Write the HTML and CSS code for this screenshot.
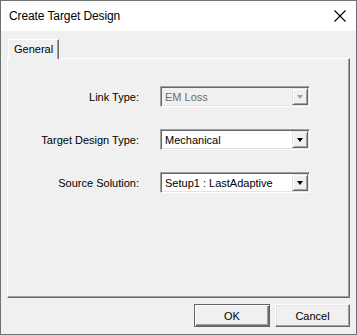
FILE: index.html
```html
<!DOCTYPE html>
<html>
<head>
<meta charset="utf-8">
<link rel="stylesheet" href="styles.css">
</head>
<body>
<div class="window">
  <div class="titlebar">
    <span class="title">Create Target Design</span>
    <svg class="close" width="12" height="12" viewBox="0 0 12 12"><path d="M0.5 0.5 L11.5 11.5 M11.5 0.5 L0.5 11.5" stroke="#000" stroke-width="1.1" fill="none"/></svg>
  </div>
  <div class="content">
    <div class="tabs"><div class="tab">General</div></div>
    <div class="panel">
      <div class="form">
        <div class="label">Link Type:</div>
        <div class="combo disabled"><span class="value">EM Loss</span><span class="btn"><span class="arrow"></span></span></div>
        <div class="label">Target Design Type:</div>
        <div class="combo"><span class="value">Mechanical</span><span class="btn"><span class="arrow"></span></span></div>
        <div class="label">Source Solution:</div>
        <div class="combo"><span class="value">Setup1 : LastAdaptive</span><span class="btn"><span class="arrow"></span></span></div>
      </div>
    </div>
    <div class="buttons">
      <button class="button default">OK</button>
      <button class="button">Cancel</button>
    </div>
  </div>
</div>
</body>
</html>
```
FILE: styles.css
```css
html, body { margin: 0; padding: 0; background: #f0f0f0; }
body { font-family: "Liberation Sans", Arial, sans-serif; font-size: 11px; color: #000; }
.window {
  width: 357px; height: 335px; box-sizing: border-box;
  border: 1px solid #717171; background: #f0f0f0;
  display: flex; flex-direction: column;
}
.titlebar {
  height: 30px; background: #fff; display: flex; align-items: center;
  padding: 0 9px 0 8px; justify-content: space-between;
}
.title { font-size: 12px; font-family: "Liberation Sans", Arial, sans-serif; letter-spacing: -0.1px; }
.close { margin-right: 1px; }
.content { padding: 8px 6px 0 6px; display: flex; flex-direction: column; }
.tabs { display: flex; height: 19px; }
.tab {
  margin-left: 1px; width: 51px; height: 20px; box-sizing: border-box;
  background: #f0f0f0; border-left: 1px solid #fff; border-top: 1px solid #fff;
  border-right: 1px solid #696969; box-shadow: inset -1px 0 #a0a0a0;
  padding: 3px 0 0 5px; position: relative; z-index: 1;
}
.panel {
  height: 240px; box-sizing: border-box;
  border-top: 1px solid #fff; border-left: 1px solid #fff;
  border-right: 1px solid #696969; border-bottom: 1px solid #696969;
  box-shadow: inset -1px -1px #a0a0a0;
  padding-top: 27px;
}
.form {
  display: grid; grid-template-columns: 131px 150px; column-gap: 21px; row-gap: 22px;
  align-items: center;
}
.label { text-align: right; }
.combo {
  height: 21px; box-sizing: border-box; display: flex; align-items: stretch;
  border: 1px solid; border-color: #a0a0a0 #fff #fff #a0a0a0;
  box-shadow: inset 1px 1px #696969, inset -1px -1px #e3e3e3;
  background: #fff; padding: 1px 1px 1px 1px;
}
.value { flex: 1; padding-left: 3px; display: flex; align-items: center; }
.btn {
  width: 16px; box-sizing: border-box; background: #f0f0f0;
  border: 1px solid; border-color: #e3e3e3 #696969 #696969 #e3e3e3;
  box-shadow: inset 1px 1px #fff, inset -1px -1px #a0a0a0;
  display: flex; align-items: center; justify-content: center;
}
.arrow {
  width: 0; height: 0; border-left: 3.5px solid transparent; border-right: 3.5px solid transparent;
  border-top: 4px solid #000; margin-top: 1px;
}
.combo.disabled { background: #f0f0f0; color: #6d6d6d; }
.combo.disabled .arrow { border-top-color: #a0a0a0; }
.buttons { display: flex; justify-content: flex-end; gap: 5px; margin-top: 6px; }
.button {
  width: 75px; height: 23px; box-sizing: border-box; margin: 0;
  font-family: "Liberation Sans", Arial, sans-serif; font-size: 11px; color: #000;
  background: #f0f0f0; padding: 0;
  border: 1px solid; border-color: #fff #696969 #696969 #fff;
  box-shadow: inset -1px -1px #a0a0a0, inset 1px 1px #e3e3e3;
}
.button.default {
  border: 1px solid #646464;
  box-shadow: inset 1px 1px #fff, inset -1px -1px #696969, inset -2px -2px #a0a0a0;
  width: 76px;
}
```
